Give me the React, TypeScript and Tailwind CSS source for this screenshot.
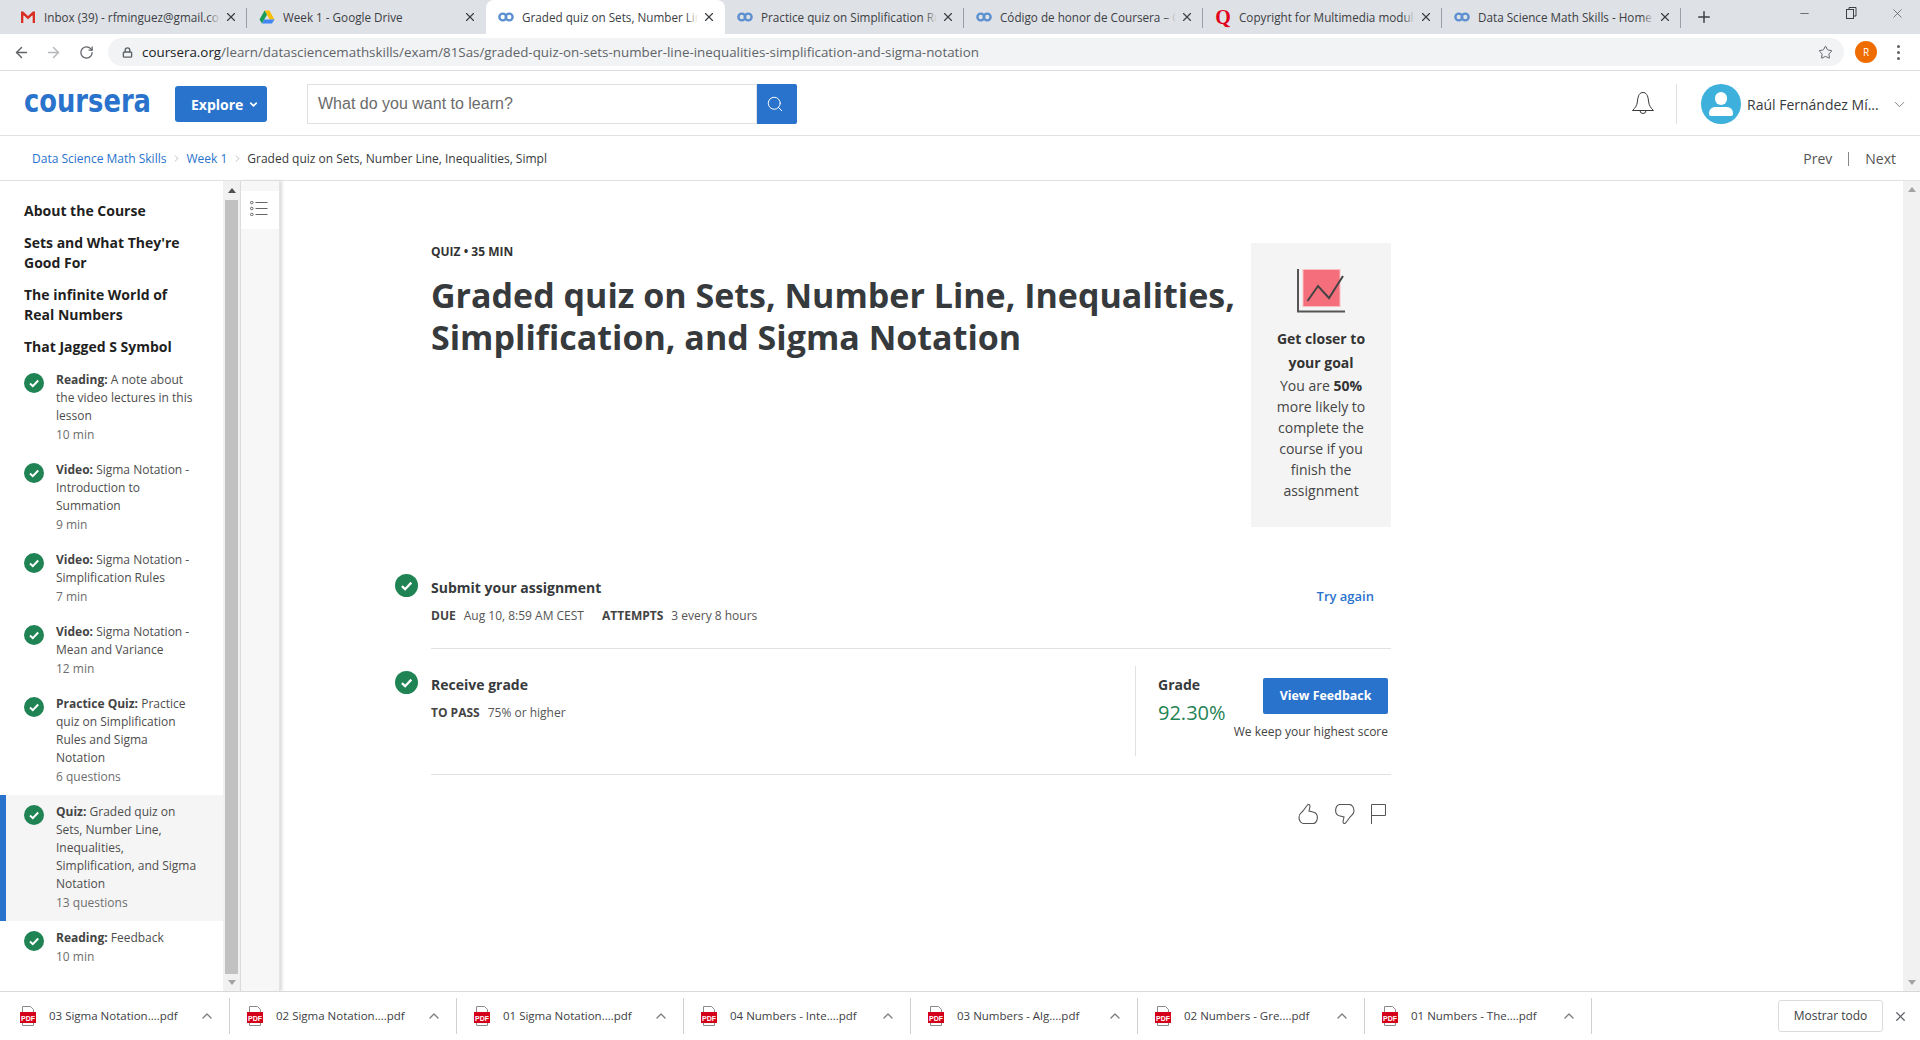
import React from "react";
import { ArrowLeft, ArrowRight, RotateCw, Lock, Star, X, Plus, Minus, ChevronDown, ChevronUp, ChevronRight, Search } from "lucide-react";

const CoFav = () => (
  <svg width="16" height="16" viewBox="0 0 16 16" fill="none" stroke="#5b8fd0" strokeWidth="2.4"><circle cx="4.8" cy="8" r="3.4" /><circle cx="11.2" cy="8" r="3.4" /></svg>
);
const Gmail = () => (
  <svg width="16" height="16" viewBox="0 0 16 16"><path d="M1 2.5h2.2L8 7l4.8-4.5H15V14h-2.6V6.6L8 10.6 3.6 6.6V14H1z" fill="#d93025" /><path d="M3.6 6.6 8 10.6l4.4-4V14h-1V8L8 11 4.6 8v6h-1z" fill="#e8eaed" /></svg>
);
const Drive = () => (
  <svg width="16" height="16" viewBox="0 0 16 16"><path d="M5.6 1.5h4.8L15.5 10.500h-4.800z" fill="#fbbc04" /><path d="M5.600 1.500 8 5.800 3 14.500.5 10.500z" fill="#1a9c58" /><path d="M3 14.500 5.400 10.500h10.100L13 14.500z" fill="#4285f4" /></svg>
);
const QFav = () => <span className="font-['Liberation_Serif',serif] font-bold text-[20px] leading-4 text-[#e3001b]">Q</span>;

const tabs: { t: string; icon: React.ReactNode; active?: boolean; sep?: boolean }[] = [
  { t: "Inbox (39) - rfminguez@gmail.com - Gmail", icon: <Gmail />, sep: true },
  { t: "Week 1 - Google Drive", icon: <Drive /> },
  { t: "Graded quiz on Sets, Number Line, Inequalities", icon: <CoFav />, active: true },
  { t: "Practice quiz on Simplification Rules and Sigma", icon: <CoFav />, sep: true },
  { t: "Código de honor de Coursera – Centro de ayuda", icon: <CoFav />, sep: true },
  { t: "Copyright for Multimedia modules and more", icon: <QFav />, sep: true },
  { t: "Data Science Math Skills - Home | Coursera", icon: <CoFav />, sep: true },
];

const Tab = ({ t, icon, active, sep }: (typeof tabs)[number]) => (
  <div className={`relative flex h-[34px] w-[239px] shrink-0 items-center pl-3 pr-[9px] ${active ? "rounded-t-lg bg-white" : ""}`}>
    <div className="flex w-4 shrink-0 items-center justify-center">{icon}</div>
    <div className="relative ml-2 w-[176px] overflow-hidden whitespace-nowrap text-[11.7px] leading-4 text-[#3c4043]">
      {t}
      <div className={`absolute inset-y-0 right-0 w-3 bg-linear-to-l to-transparent ${active ? "from-white" : "from-[#dee1e6]"}`} />
    </div>
    <X className="ml-auto text-[#3c4043]" size={14} strokeWidth={2} />
    {sep && <div className="absolute right-0 top-[8px] h-[20px] w-px bg-[#9aa0a6]" />}
  </div>
);

const Check = ({ size = "h-5 w-5" }: { size?: string }) => (
  <div className={`flex shrink-0 items-center justify-center rounded-full bg-[#1f8354] ${size}`}>
    <svg viewBox="0 0 20 20" className="h-full w-full" fill="none" stroke="white" strokeWidth="2"><path d="M6 10.500l2.800 2.700 5.400-5.700" /></svg>
  </div>
);

const lessons = [
  { b: "Reading:", t: "A note about the video lectures in this lesson", m: "10 min" },
  { b: "Video:", t: "Sigma Notation - Introduction to Summation", m: "9 min" },
  { b: "Video:", t: "Sigma Notation - Simplification Rules", m: "7 min" },
  { b: "Video:", t: "Sigma Notation - Mean and Variance", m: "12 min" },
  { b: "Practice Quiz:", t: "Practice quiz on Simplification Rules and Sigma Notation", m: "6 questions" },
  { b: "Quiz:", t: "Graded quiz on Sets, Number Line, Inequalities, Simplification, and Sigma Notation", m: "13 questions", active: true },
  { b: "Reading:", t: "Feedback", m: "10 min" },
];

const downloads = ["03 Sigma Notation....pdf", "02 Sigma Notation....pdf", "01 Sigma Notation....pdf", "04 Numbers - Inte....pdf", "03 Numbers - Alg....pdf", "02 Numbers - Gre....pdf", "01 Numbers - The....pdf"];

const Pdf = () => (
  <svg width="16" height="20" viewBox="0 0 16 20" className="shrink-0">
    <path d="M2.500 .500h8l3 3V7h-11z" fill="#fff" stroke="#8a8a8a" />
    <rect y="6" width="16" height="11" fill="#d4001a" />
    <path d="M2.500 17v2.500h11V17" fill="#fff" stroke="#8a8a8a" />
    <text x="8" y="14.500" textAnchor="middle" fontSize="7" fontWeight="700" fill="#fff" fontFamily="Liberation Sans, sans-serif">PDF</text>
  </svg>
);

const Tri = ({ up, dark }: { up?: boolean; dark?: boolean }) => (
  <div className={`h-0 w-0 border-x-[4px] border-x-transparent ${up ? `border-b-[5px] ${dark ? "border-b-[#505050]" : "border-b-[#a3a3a3]"}` : "border-t-[5px] border-t-[#a3a3a3]"}`} />
);

const THUMB = "M1 13C1 10 3 9 5 7L9 1.500C10 0 12 0 12 2.500L11 7L15 8C19 9 20 12 19 16C18 19 17 19.500 15 19.500L6 19.500C3 19.500 1 17 1 13Z";

export default function App() {
  return (
    <div className="flex h-[1040px] w-[1920px] flex-col overflow-hidden bg-white font-['Open_Sans',sans-serif] text-[#373a3c]">
      {/* Tab strip */}
      <div className="flex h-[34px] shrink-0 items-center bg-[#dee1e6] pl-2">
        {tabs.map((t) => <Tab key={t.t} {...t} />)}
        <Plus className="ml-[14px] text-[#3c4043]" size={18} strokeWidth={2} />
        <div className="ml-auto flex items-center pb-2 text-[#3c4043]">
          <Minus size={13} strokeWidth={1.3} className="mr-[35px]" />
          <svg width="11" height="12" viewBox="0 0 11 12" fill="none" stroke="#3c4043" className="mr-[33px]"><rect x=".5" y="2.500" width="7" height="9" /><path d="M3 2.500V.500h7v8.500H7.500" /></svg>
          <X size={15} strokeWidth={1} className="mr-[15px]" />
        </div>
      </div>
      {/* Toolbar */}
      <div className="flex h-[37px] shrink-0 items-center border-b border-[#dadce0] bg-white">
        <ArrowLeft className="ml-[13px] text-[#5f6368]" size={17} strokeWidth={2} />
        <ArrowRight className="ml-[15px] text-[#b4b6b9]" size={17} strokeWidth={2} />
        <RotateCw className="ml-[17px] text-[#5f6368]" size={15} strokeWidth={2} />
        <div className="ml-[14px] flex h-[28px] w-[1736px] items-center rounded-full bg-[#f1f3f4] pl-[14px] pr-[11px] text-[13.36px]">
          <Lock size={11} strokeWidth={3} className="text-[#5f6368]" />
          <span className="ml-[9px] text-[#202124]">coursera.org</span>
          <span className="text-[#5f6368]">/learn/datasciencemathskills/exam/81Sas/graded-quiz-on-sets-number-line-inequalities-simplification-and-sigma-notation</span>
          <Star size={15} strokeWidth={1.6} className="ml-auto text-[#5f6368]" />
        </div>
        <div className="ml-[11px] flex h-[22px] w-[22px] items-center justify-center rounded-full bg-[#ef6c00] text-[10px] text-white">R</div>
        <div className="ml-[20px] flex flex-col gap-[3px]">
          <div className="h-[3px] w-[3px] rounded-full bg-[#5f6368]" />
          <div className="h-[3px] w-[3px] rounded-full bg-[#5f6368]" />
          <div className="h-[3px] w-[3px] rounded-full bg-[#5f6368]" />
        </div>
      </div>
      {/* Coursera header */}
      <div className="flex h-[65px] shrink-0 items-center border-b border-[#e1e1e1] pl-6 pt-[2px]">
        <svg width="128" height="22" viewBox="0 0 128 22" className="shrink-0" aria-label="coursera">
          <text x="0" y="19" fontFamily="DejaVu Sans, sans-serif" fontWeight="700" fontSize="32" fill="#2a73cc" textLength="127" lengthAdjust="spacingAndGlyphs">coursera</text>
        </svg>
        <div className="ml-[23px] flex h-9 w-[92px] items-center gap-[5px] rounded-[3px] bg-[#2a73cc] pl-4 text-[14px] font-bold text-white">
          Explore <ChevronDown size={11} strokeWidth={3.5} />
        </div>
        <div className="ml-[40px] flex h-10 w-[450px] items-center border border-[#e1e1e1] pl-[10px] font-['Liberation_Sans',sans-serif] text-[16px] text-[#6b6b6b]">
          What do you want to learn?
        </div>
        <div className="flex h-10 w-10 items-center justify-center rounded-r-[2px] bg-[#2a73cc] pr-1 text-white">
          <Search size={18} strokeWidth={1.3} />
        </div>
        <svg width="22" height="24" viewBox="0 0 22 24" fill="none" stroke="#373a3c" className="ml-[835px]">
          <path d="M.5 18.500C3 16 5 14 5.500 9C6 3 8 .5 11 .5C14 .5 16 3 16.500 9C17 14 19 16 21.500 18.500Z" />
          <path d="M8 18.500a3 3 0 0 0 6 0" />
        </svg>
        <div className="ml-[22px] h-10 w-px bg-[#e1e1e1]" />
        <div className="relative ml-[24px] h-10 w-10 shrink-0 overflow-hidden rounded-full bg-[#3db1dc]">
          <div className="absolute left-[14px] top-[8px] h-[13px] w-[12px] rounded-full bg-white" />
          <div className="absolute left-[8px] top-[23px] h-[9px] w-[24px] rounded-t-[6px] rounded-b-[2px] bg-white" />
        </div>
        <span className="ml-[6px] w-[134px] whitespace-nowrap text-[14px] text-[#373a3c]">Raúl Fernández Mí...</span>
        <ChevronDown size={17} strokeWidth={1} className="ml-[10px] text-[#555]" />
      </div>
      {/* Breadcrumb */}
      <div className="flex h-[45px] shrink-0 items-center border-b border-[#e1e1e1] pl-[32px] pt-px text-[12px]">
        <span className="text-[#2a73cc]">Data Science Math Skills</span>
        <ChevronRight size={11} strokeWidth={1} className="mx-[4.5px] text-[#777]" />
        <span className="text-[#2a73cc]">Week 1</span>
        <ChevronRight size={11} strokeWidth={1} className="mx-[4.5px] text-[#777]" />
        <span className="text-[#373a3c]">Graded quiz on Sets, Number Line, Inequalities, Simpl</span>
        <div className="ml-auto flex items-center pr-6 text-[14px] text-[#555]">
          <span>Prev</span>
          <div className="mx-[16px] h-[14px] w-px bg-[#888]" />
          <span>Next</span>
        </div>
      </div>
      {/* Main */}
      <div className="flex min-h-0 flex-1">
        <aside className="w-[223px] shrink-0 pt-[14px]">
          {["About the Course", "Sets and What They're Good For", "The infinite World of Real Numbers", "That Jagged S Symbol"].map((h) => (
            <div key={h} className="box-content w-[175px] py-[6px] pl-6 text-[14px] font-bold leading-5 text-[#1f1f1f]">{h}</div>
          ))}
          {lessons.map((l) => (
            <div key={l.t} className={`flex py-2 pl-6 ${l.active ? "relative bg-[#f5f5f5]" : ""}`}>
              {l.active && <div className="absolute inset-y-0 left-0 w-[6px] bg-[#2a73cc]" />}
              <div className="mt-[2px]"><Check /></div>
              <div className="ml-3 w-[142px] text-[12px] leading-[18px] text-[#4d4d4d]">
                <div><b className="font-bold text-[#444]">{l.b}</b> {l.t}</div>
                <div className="leading-[20px] text-[#6e6e6e]">{l.m}</div>
              </div>
            </div>
          ))}
        </aside>
        <div className="flex w-[17px] shrink-0 flex-col items-center bg-[#f1f1f1]">
          <div className="flex h-[19px] items-center justify-center"><Tri up dark /></div>
          <div className="h-[774px] w-[13px] bg-[#c1c1c1]" />
          <div className="flex h-[17px] items-center justify-center"><Tri /></div>
        </div>
        <div className="w-[40px] shrink-0 border-l border-r border-l-[#dcdcdc] border-r-[#e4e4e4] bg-[#f7f7f7] pt-[10px] shadow-[2px_0_3px_#d8d8d8]">
          <div className="flex h-[38px] bg-white pl-[9px] pt-[10px]">
            <svg width="18" height="15" viewBox="0 0 18 15" fill="none" stroke="#666"><circle cx="1.800" cy="1.500" r="1.300" /><circle cx="1.800" cy="7.500" r="1.300" /><circle cx="1.800" cy="13.500" r="1.300" /><path d="M5.500 1.500H17.500M5.500 7.500H17.500M5.500 13.500H17.500" /></svg>
          </div>
        </div>
        <main className="min-w-0 flex-1 pl-[151px] pt-[62px]">
          <div className="flex w-[960px]">
            <div className="flex-1">
              <div className="text-[12px] font-bold leading-[18px] text-[#333]">QUIZ • 35 MIN</div>
              <h1 className="mt-[13px] text-[34px] font-bold leading-[42px] text-[#373a3c]">Graded quiz on Sets, Number Line, Inequalities, Simplification, and Sigma Notation</h1>
            </div>
            <div className="ml-[13px] h-[284px] w-[140px] shrink-0 bg-[#f4f4f4] pt-[26px] text-center text-[14px]">
              <svg width="48" height="44" viewBox="0 0 48 44" className="mx-auto">
                <rect x="6" y="0.500" width="37" height="37" fill="#f46f7b" stroke="#f9c0c5" />
                <path d="M1 0v42.500h47" fill="none" stroke="#555" strokeWidth="2" />
                <path d="M10.500 32 21 17l11 12 14-22" fill="none" stroke="#444" strokeWidth="2" />
              </svg>
              <div className="mt-[14px] px-4 font-bold leading-6 text-[#333]">Get closer to your goal</div>
              <div className="px-4 leading-[21px] text-[#444]">You are <b className="text-[#333]">50%</b> more likely to complete the course if you finish the assignment</div>
            </div>
          </div>
          <div className="-ml-[36px] mt-[47px] flex w-[996px]">
            <div className="w-[36px] shrink-0"><Check size="h-[23px] w-[23px]" /></div>
            <div className="flex h-[75px] flex-1 justify-between border-b border-[#e1e1e1] pt-1">
              <div>
                <div className="text-[14px] font-bold leading-5 text-[#373a3c]">Submit your assignment</div>
                <div className="mt-[9px] flex text-[12px] leading-[18px] text-[#555]">
                  <b className="mr-2 font-bold text-[#444]">DUE</b>Aug 10, 8:59 AM CEST
                  <b className="ml-[18px] mr-2 font-bold text-[#444]">ATTEMPTS</b>3 every 8 hours
                </div>
              </div>
              <div className="mr-[17px] mt-[8px] text-[13px] font-semibold leading-5 text-[#2a73cc]">Try again</div>
            </div>
          </div>
          <div className="-ml-[36px] flex w-[996px]">
            <div className="w-[36px] shrink-0 pt-[22px]"><Check size="h-[23px] w-[23px]" /></div>
            <div className="flex h-[126px] flex-1 border-b border-[#e1e1e1]">
              <div className="flex-1 pt-[26px]">
                <div className="text-[14px] font-bold leading-5 text-[#373a3c]">Receive grade</div>
                <div className="mt-[9px] flex text-[12px] leading-[18px] text-[#555]">
                  <b className="mr-2 font-bold text-[#444]">TO PASS</b>75% or higher
                </div>
              </div>
              <div className="mt-[17px] flex h-[90px] w-[256px] justify-between border-l border-[#e1e1e1] pl-[22px] pr-[3px]">
                <div className="pt-[9px]">
                  <div className="text-[14px] font-bold leading-5 text-[#373a3c]">Grade</div>
                  <div className="mt-[4px] text-[20px] leading-7 text-[#1f8354]">92.30%</div>
                </div>
                <div className="flex flex-col items-end pt-[12px]">
                  <div className="flex h-9 w-[125px] items-center justify-center rounded-[2px] bg-[#2a73cc] text-[12.4px] font-bold text-white">View Feedback</div>
                  <div className="mt-[9px] whitespace-nowrap text-[12px] leading-[18px] text-[#444]">We keep your highest score</div>
                </div>
              </div>
            </div>
          </div>
          <div className="flex w-[960px] items-center justify-end pr-[5px] pt-[29px]">
            <svg width="20" height="20" viewBox="0 0 20 20" fill="none" stroke="#555" strokeWidth="1.100"><path d={THUMB} /></svg>
            <svg width="20" height="20" viewBox="0 0 20 20" fill="none" stroke="#555" strokeWidth="1.100" className="ml-[17px]"><path d={THUMB} transform="rotate(180 10 10)" /></svg>
            <svg width="15" height="20" viewBox="0 0 15 20" fill="none" stroke="#555" className="ml-[16px]"><path d="M.5 20V.5h14v11H.5" /></svg>
          </div>
        </main>
        <div className="flex w-[17px] shrink-0 flex-col items-center justify-between bg-[#f1f1f1] py-[6px]">
          <Tri up />
          <Tri />
        </div>
      </div>
      {/* Downloads */}
      <div className="flex h-[49px] shrink-0 items-center border-t border-[#d9d9d9] bg-white pl-[3px]">
        {downloads.map((d) => (
          <div key={d} className="flex h-9 w-[227px] shrink-0 items-center border-r border-[#d0d0d0] pl-[17px] text-[11.5px] text-[#3c4043]">
            <Pdf />
            <span className="ml-[13px] w-[150px] whitespace-nowrap">{d}</span>
            <ChevronUp size={16} strokeWidth={2} className="text-[#7a7e82]" />
          </div>
        ))}
        <div className="ml-auto flex h-8 w-[105px] items-center justify-center rounded-[3px] border border-[#dadce0] text-[12px] text-[#3c4043]">Mostrar todo</div>
        <X size={15} strokeWidth={2} className="ml-[10px] mr-[12px] text-[#5f6368]" />
      </div>
    </div>
  );
}
